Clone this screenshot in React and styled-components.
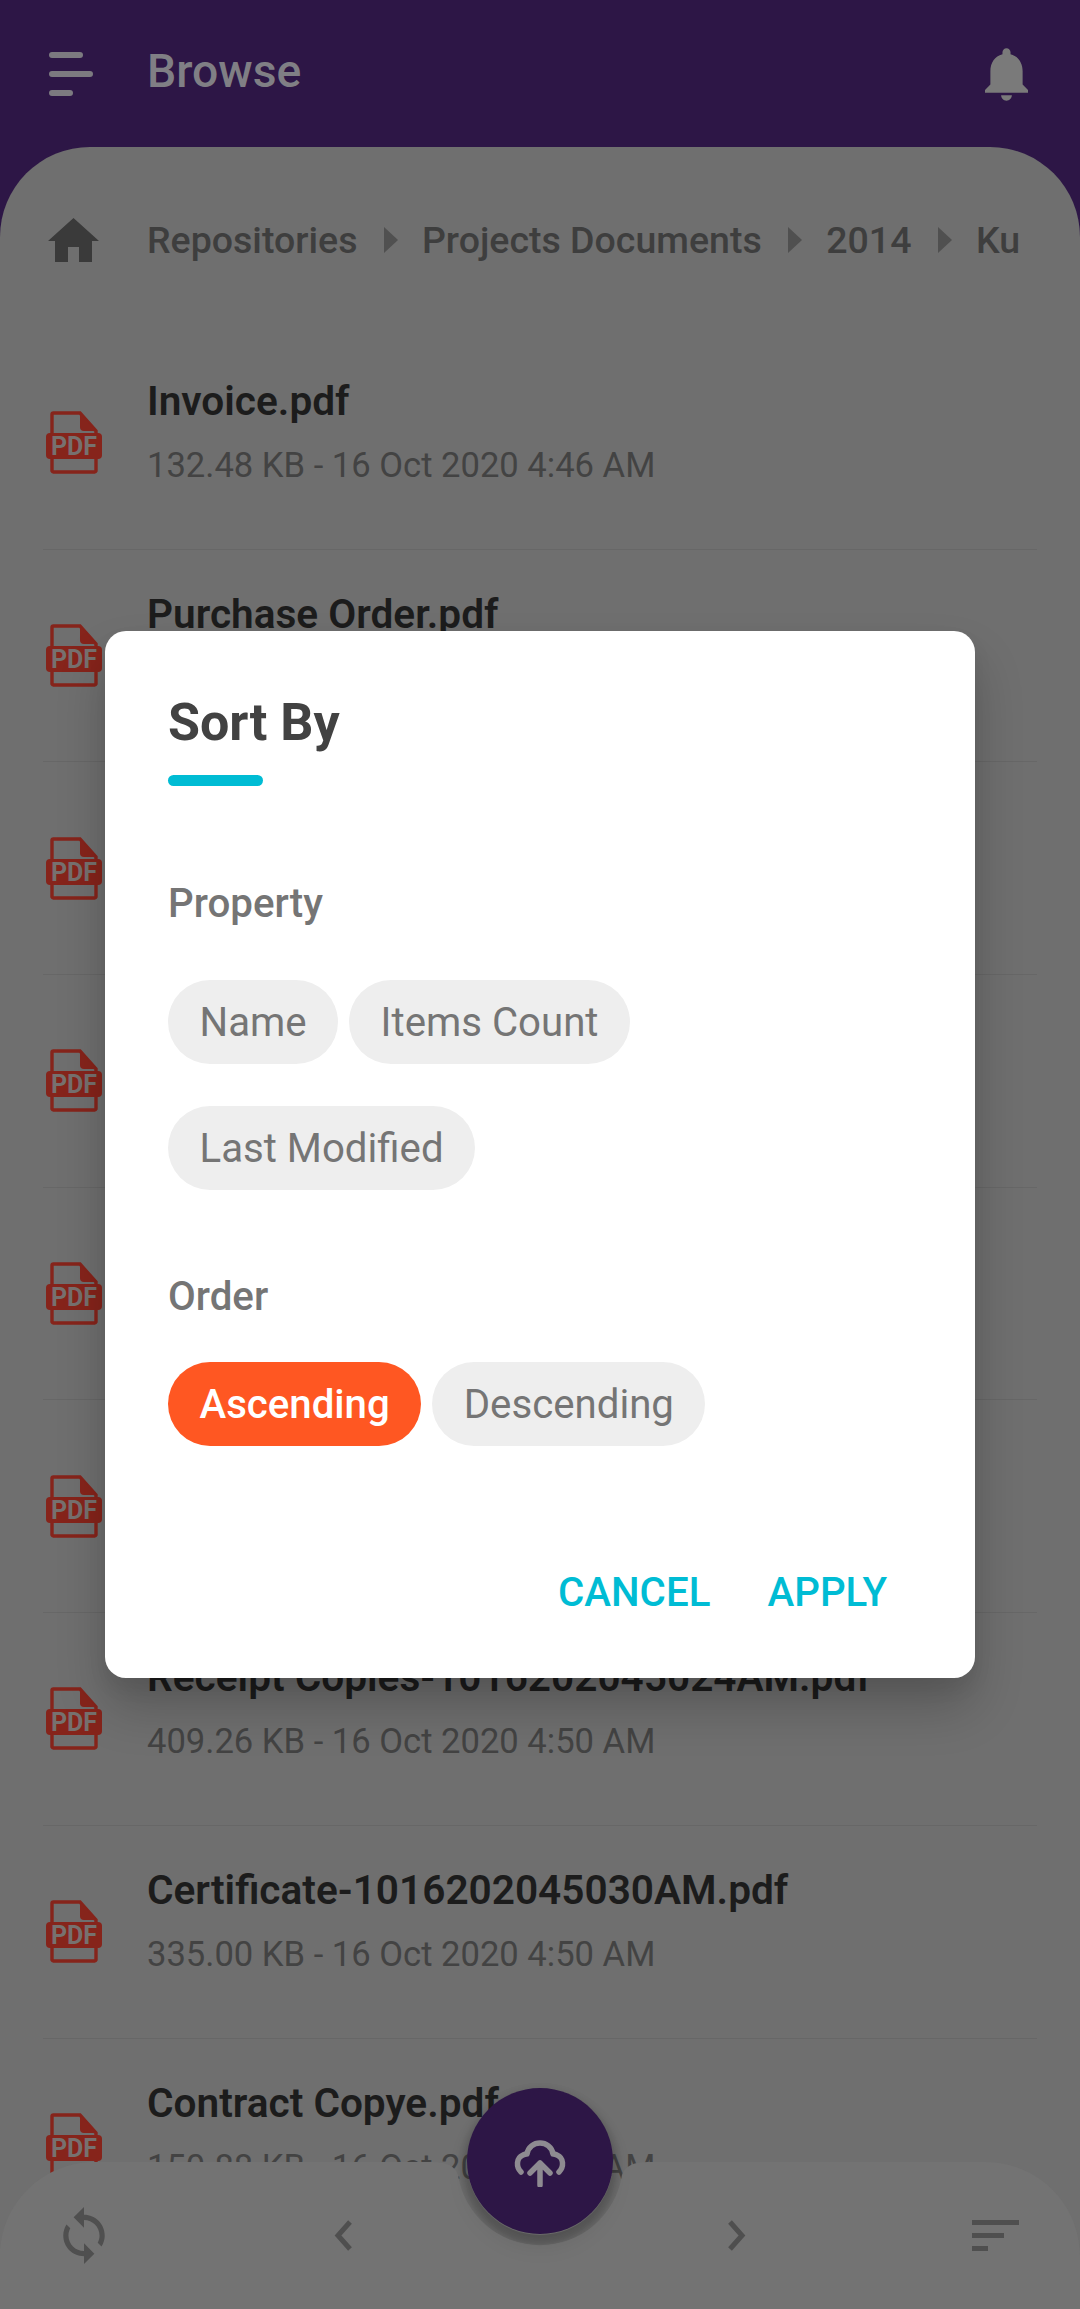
import styled, { createGlobalStyle } from 'styled-components';

const files = [
  { name: 'Invoice.pdf', meta: '132.48 KB - 16 Oct 2020 4:46 AM' },
  { name: 'Purchase Order.pdf' },
  {},
  {},
  {},
  {},
  { name: 'Receipt Copies-1016202045024AM.pdf', meta: '409.26 KB - 16 Oct 2020 4:50 AM' },
  { name: 'Certificate-1016202045030AM.pdf', meta: '335.00 KB - 16 Oct 2020 4:50 AM' },
  { name: 'Contract Copye.pdf', meta: '150.88 KB - 16 Oct 2020 4:50 AM' },
];

const crumbs = ['Repositories', 'Projects Documents', '2014', 'Ku'];

const App = () => {
  return (
    <Page>
      <GlobalStyle />
      <Header>
        <MenuButton>
          <MenuLine $width={34} />
          <MenuLine $width={44} />
          <MenuLine $width={24} />
        </MenuButton>
        <HeaderTitle>Browse</HeaderTitle>
        <BellIcon viewBox='4 2.5 16 19.5'>
          <path d='M12 22c1.1 0 2-.9 2-2h-4c0 1.1.89 2 2 2zm6-6v-5c0-3.07-1.64-5.64-4.5-6.32V4c0-.83-.67-1.5-1.5-1.5s-1.5.67-1.5 1.5v.68C7.63 5.36 6 7.92 6 11v5l-2 2v1h16v-1l-2-2z' />
        </BellIcon>
      </Header>

      <Content>
        <Breadcrumb>
          <HomeIcon viewBox='0 0 51 44'>
            <path d='M25.5 0L51 23H44V44H31V29H20V44H7V23H0Z' />
          </HomeIcon>
          <CrumbTrail>
            {crumbs.map((crumb, index) => (
              <Crumb key={crumb}>
                {index > 0 && (
                  <CrumbArrow viewBox='0 0 14 26'>
                    <path d='M0 0L14 13L0 26Z' />
                  </CrumbArrow>
                )}
                {crumb}
              </Crumb>
            ))}
          </CrumbTrail>
        </Breadcrumb>

        <FileList>
          {files.map((file, index) => (
            <FileRow key={index}>
              <PdfIcon viewBox='0 0 56 63'>
                <path
                  d='M6 14V3.500A1.500 1.500 0 0 1 7.500 2H34L50 20V26M6 48V60A1.500 1.500 0 0 0 7.500 61H48.500A1.500 1.500 0 0 0 50 60V48M6 26V14'
                  fill='none'
                  stroke='#86241b'
                  strokeWidth='3.400'
                />
                <path d='M34 2L50 20H38A4 4 0 0 1 34 16Z' fill='#86241b' />
                <rect x='0' y='22' width='56' height='26' rx='4' fill='#86241b' />
                <PdfLabel x='28' y='44' textAnchor='middle'>
                  PDF
                </PdfLabel>
              </PdfIcon>
              <FileText>
                <FileName>{file.name}</FileName>
                <FileMeta>{file.meta}</FileMeta>
              </FileText>
            </FileRow>
          ))}
        </FileList>
      </Content>

      <BottomBar>
        <BarShape viewBox='0 0 1080 147'>
          <path d='M0 147V95C0 42 42 0 95 0H432C447 0 455 4 458 13A83 83 0 0 0 622 13C625 4 633 0 648 0H985C1038 0 1080 42 1080 95V147Z' />
        </BarShape>
        <FabHalo />
        <BarIcons>
          <SyncIcon viewBox='4 1 16 22'>
            <path d='M12 4V1L8 5l4 4V6c3.31 0 6 2.69 6 6 0 1.010-.25 1.970-.7 2.800l1.460 1.460C19.540 15.030 20 13.570 20 12c0-4.420-3.580-8-8-8zm0 14c-3.310 0-6-2.690-6-6 0-1.010.25-1.970.7-2.800L5.240 7.740C4.460 8.970 4 10.430 4 12c0 4.420 3.580 8 8 8v3l4-4-4-4v3z' />
          </SyncIcon>
          <ChevronIcon viewBox='0 0 20 31'>
            <path d='M17 2L5 15.500L17 29' />
          </ChevronIcon>
          <ChevronIcon viewBox='0 0 20 31'>
            <path d='M3 2L15 15.500L3 29' />
          </ChevronIcon>
          <SortLines>
            <SortLine $width={47} />
            <SortLine $width={32} />
            <SortLine $width={16} />
          </SortLines>
        </BarIcons>
        <Fab>
          <CloudIcon viewBox='0 0 54 47'>
            <path d='M8 32C3 27 3 18 10 15C12 14 13 14 14 14C15 7 21 3 27 3C33 3 39 7 40 14C41 14 42 14 44 15C51 18 51 27 46 32' />
            <path d='M17 33L27 23L37 33M27 23V45' />
          </CloudIcon>
        </Fab>
      </BottomBar>

      <Scrim>
        <Dialog>
          <DialogTitle>Sort By</DialogTitle>
          <TitleAccent />
          <SectionLabel>Property</SectionLabel>
          <ChipGroup $offset={54}>
            <Chip>Name</Chip>
            <Chip>Items Count</Chip>
            <Chip>Last Modified</Chip>
          </ChipGroup>
          <SectionLabel $order>Order</SectionLabel>
          <ChipGroup $offset={43}>
            <Chip $selected>Ascending</Chip>
            <Chip>Descending</Chip>
          </ChipGroup>
          <DialogActions>
            <ActionButton>CANCEL</ActionButton>
            <ActionButton>APPLY</ActionButton>
          </DialogActions>
        </Dialog>
      </Scrim>
    </Page>
  );
};

export default App;

const GlobalStyle = createGlobalStyle`
  html,
  body {
    margin: 0;
    padding: 0;
  }

  body {
    font-family: Roboto, 'Liberation Sans', sans-serif;
  }

  * {
    box-sizing: border-box;
  }
`;

const Page = styled.div`
  position: relative;
  width: 1080px;
  height: 2309px;
  display: flex;
  flex-direction: column;
  overflow: hidden;
  background: #2d1646;
`;

const Header = styled.header`
  height: 147px;
  flex-shrink: 0;
  padding: 0 52px 3px 49px;
  display: flex;
  align-items: flex-start;
`;

const MenuButton = styled.div`
  width: 98px;
  padding-top: 52px;
  display: flex;
  flex-direction: column;
  gap: 13px;
`;

const MenuLine = styled.span`
  display: block;
  width: ${({ $width }) => $width}px;
  height: 6px;
  border-radius: 3px;
  background: #7c7a80;
`;

const HeaderTitle = styled.h1`
  flex: 1;
  margin: 48px 0 0;
  color: #807f85;
  font-size: 46.300px;
  font-weight: 500;
  line-height: 47px;
`;

const BellIcon = styled.svg`
  width: 43px;
  height: 53px;
  margin-top: 48px;
  fill: #7a7a7a;
`;

const Content = styled.main`
  flex: 1;
  min-height: 0;
  background: #6f6f6f;
  border-radius: 90px 90px 0 0;
`;

const Breadcrumb = styled.nav`
  height: 190px;
  padding: 71px 40px 0 48px;
  display: flex;
  align-items: flex-start;
  gap: 48px;
`;

const HomeIcon = styled.svg`
  width: 51px;
  height: 44px;
  flex-shrink: 0;
  fill: #3a3a3a;
`;

const CrumbTrail = styled.div`
  flex: 1;
  display: flex;
  white-space: nowrap;
`;

const Crumb = styled.span`
  display: flex;
  align-items: center;
  color: #3e3e3e;
  font-size: 37.500px;
  font-weight: 500;
  line-height: 44px;
`;

const CrumbArrow = styled.svg`
  width: 14px;
  height: 26px;
  margin: 0 24px 0 26.500px;
  fill: #505050;
`;

const FileList = styled.div`
  margin: 0 43px;
`;

const FileRow = styled.div`
  height: 212.7px;
  padding-left: 3px;
  display: flex;
  align-items: center;
  gap: 45px;
  border-bottom: 1px solid #676767;
`;

const PdfIcon = styled.svg`
  width: 56px;
  height: 63px;
  flex-shrink: 0;
`;

const PdfLabel = styled.text`
  fill: #77716f;
  font-family: Roboto, 'Liberation Sans', sans-serif;
  font-size: 25px;
  font-weight: 700;
`;

const FileText = styled.div`
  padding-bottom: 20px;
  display: flex;
  flex-direction: column;
  gap: 22px;
`;

const FileName = styled.div`
  height: 43px;
  color: #1c1c1c;
  font-size: 40.600px;
  font-weight: 600;
  line-height: 43px;
  white-space: nowrap;
`;

const FileMeta = styled.div`
  height: 40px;
  color: #434343;
  font-size: 34.600px;
  line-height: 40px;
  white-space: nowrap;
`;

const BottomBar = styled.footer`
  position: absolute;
  left: 0;
  right: 0;
  bottom: 0;
  height: 147px;
  isolation: isolate;
`;

const BarShape = styled.svg`
  position: absolute;
  inset: 0;
  width: 100%;
  height: 100%;
  fill: #737373;
`;

const FabHalo = styled.div`
  position: absolute;
  top: -73px;
  left: 50%;
  z-index: -1;
  width: 146px;
  height: 146px;
  margin-left: -73px;
  border-radius: 50%;
  box-shadow: 0 6px 8px 4px rgba(0, 0, 0, 0.2);
`;

const BarIcons = styled.div`
  position: relative;
  height: 100%;
  padding-left: 63px;
  display: grid;
  grid-template-columns: 270px 394px 245px 47px;
  align-items: center;
`;

const SyncIcon = styled.svg`
  width: 42px;
  height: 57px;
  fill: #4f4f4f;
`;

const ChevronIcon = styled.svg`
  width: 20px;
  height: 31px;
  fill: none;
  stroke: #4f4f4f;
  stroke-width: 5;
`;

const SortLines = styled.div`
  display: flex;
  flex-direction: column;
  gap: 8px;
`;

const SortLine = styled.span`
  display: block;
  width: ${({ $width }) => $width}px;
  height: 5px;
  background: #4f4f4f;
`;

const Fab = styled.button`
  position: absolute;
  top: -74px;
  left: 50%;
  width: 146px;
  height: 146px;
  margin-left: -73px;
  padding: 4px 0 0;
  display: flex;
  align-items: center;
  justify-content: center;
  border: 0;
  border-radius: 50%;
  background: #2d1646;
  box-shadow: 0 12px 22px rgba(0, 0, 0, 0.08);
`;

const CloudIcon = styled.svg`
  width: 54px;
  height: 47px;
  fill: none;
  stroke: #8e8b91;
  stroke-width: 5.500;
  stroke-linecap: round;
  stroke-linejoin: round;
`;

const Scrim = styled.div`
  position: absolute;
  inset: 0;
  display: flex;
  align-items: center;
  justify-content: center;
`;

const Dialog = styled.section`
  width: 870px;
  height: 1047px;
  padding: 63px 63px 0;
  display: flex;
  flex-direction: column;
  align-items: flex-start;
  border-radius: 21px;
  background: #fff;
  box-shadow:
    0 30px 50px rgba(0, 0, 0, 0.2),
    0 10px 20px rgba(0, 0, 0, 0.06);
`;

const DialogTitle = styled.h2`
  margin: 0;
  color: #424242;
  font-size: 52px;
  font-weight: 700;
  line-height: 58px;
`;

const TitleAccent = styled.span`
  display: block;
  width: 95px;
  height: 11px;
  margin-top: 23px;
  border-radius: 6px;
  background: #00bcd4;
`;

const SectionLabel = styled.div`
  margin-top: ${({ $order }) => ($order ? '85px' : '96px')};
  color: #757575;
  font-size: 40.300px;
  font-weight: 500;
  line-height: 44px;
`;

const ChipGroup = styled.div`
  margin-top: ${({ $offset }) => $offset}px;
  display: flex;
  flex-wrap: wrap;
  gap: 42px 11px;
  max-width: 600px;
`;

const Chip = styled.span`
  height: 84px;
  padding: 0 31.500px;
  display: flex;
  align-items: center;
  border-radius: 42px;
  background: ${({ $selected }) => ($selected ? '#ff5722' : '#eeeeee')};
  color: ${({ $selected }) => ($selected ? '#fff' : '#757575')};
  font-size: 40.200px;
  font-weight: ${({ $selected }) => ($selected ? 500 : 400)};
`;

const DialogActions = styled.div`
  align-self: flex-end;
  margin-top: 124px;
  padding-right: 25px;
  display: flex;
  gap: 57px;
`;

const ActionButton = styled.span`
  color: #00bcd4;
  font-size: 40.300px;
  font-weight: 500;
  line-height: 46px;
`;
